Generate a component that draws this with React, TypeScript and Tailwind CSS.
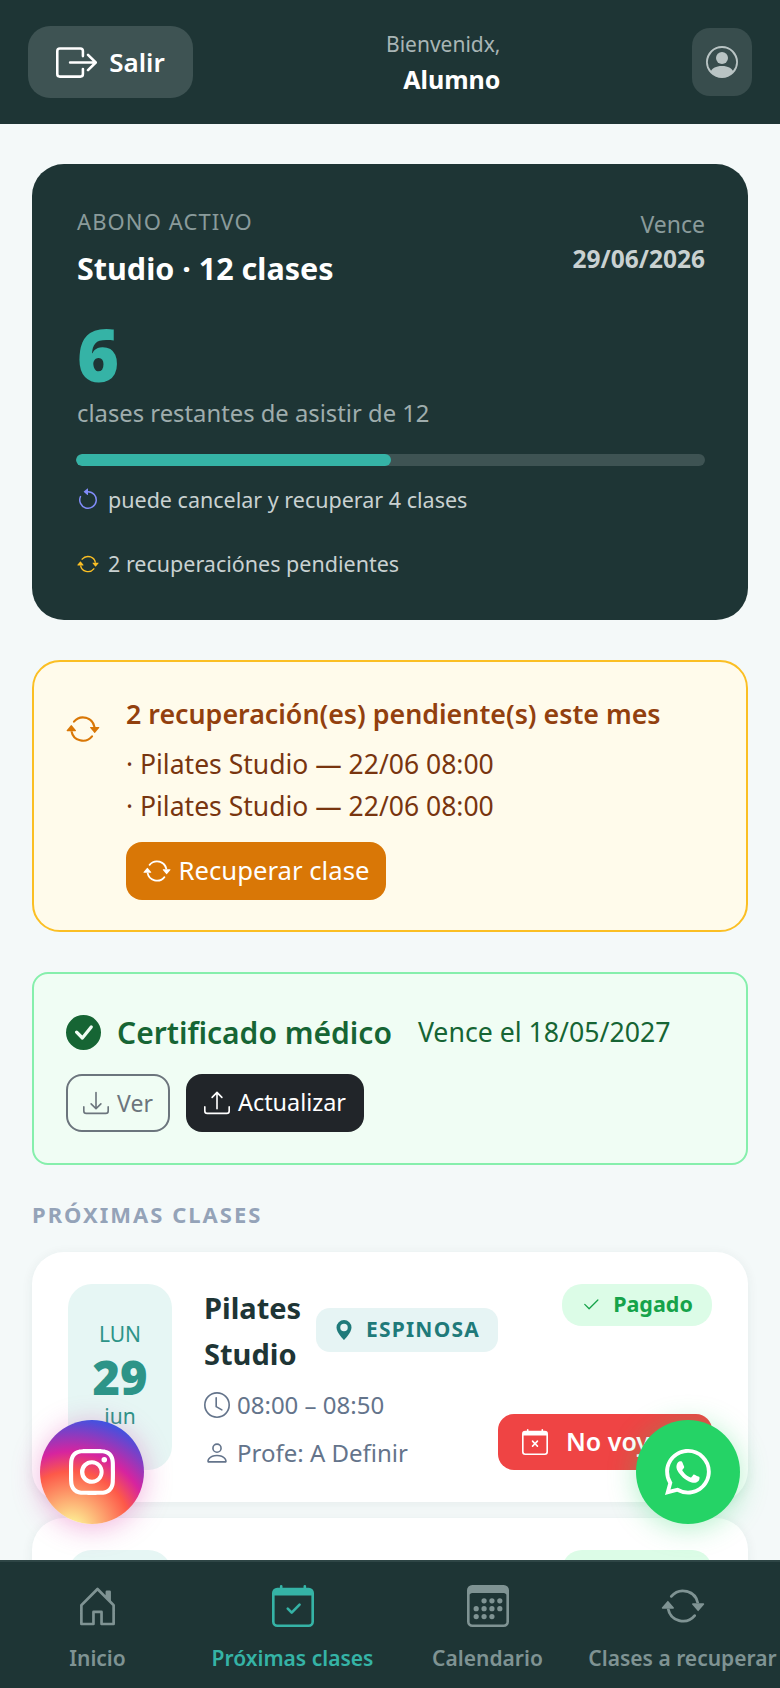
import React from "react";
import {
  BsBoxArrowRight, BsPersonCircle, BsArrowRepeat, BsArrowCounterclockwise, BsCheckCircleFill,
  BsDownload, BsUpload, BsGeoAltFill, BsClock, BsPerson, BsCalendarX, BsCalendarCheck, BsCalendar3,
  BsHouseDoor, BsInstagram, BsWhatsapp, BsCheck2,
} from "react-icons/bs";

function ClassCard() {
  return (
    <div className="flex rounded-[32px] bg-white px-9 py-8 h-[250px] shrink-0 shadow-[0_2px_12px_rgba(30,53,53,0.07)]">
      <div className="w-[104px] h-[186px] shrink-0 rounded-3xl bg-[#e6f6f4] flex flex-col items-center pt-[35px] text-[#2d9488]">
        <span className="text-[21px] leading-[30px]">LUN</span>
        <span className="mt-[3px] text-[47px] leading-[50px] font-black">29</span>
        <span className="text-[21px] leading-[28px]">jun</span>
      </div>
      <div className="ml-8 flex-1 flex flex-col">
        <div className="flex items-start justify-between">
          <div className="flex items-center mt-[1px]">
            <div className="w-[96px] text-[29px] leading-[46px] font-bold text-[#1e3535]">Pilates Studio</div>
            <div className="ml-4 -mt-[2px] h-[44px] w-[182px] justify-center rounded-[14px] bg-[#e6f4f4] flex items-center gap-[12px] text-[#1f7a7a]">
              <BsGeoAltFill size={20} />
              <span className="text-[21px] font-bold tracking-[1.2px]">ESPINOSA</span>
            </div>
          </div>
          <div className="h-[42px] w-[150px] rounded-[20px] bg-[#dcfce7] flex items-center justify-center gap-3 text-[#16a34a]">
            <BsCheck2 size={20} />
            <span className="-mt-[2px] text-[21.5px] font-bold">Pagado</span>
          </div>
        </div>
        <div className="flex justify-between">
          <div>
            <div className="mt-[4px] flex items-center gap-[7px] text-[24px] leading-[48px] text-[#64748b]"><BsClock size={26} />08:00 – 08:50</div>
            <div className="flex items-center gap-[7px] text-[24px] leading-[48px] text-[#64748b]"><BsPerson size={26} />Profe: A Definir</div>
          </div>
          <div className="mt-[37px] h-[56px] w-[214px] rounded-2xl bg-[#ef4444] flex items-center pl-6 gap-[18px] text-white">
            <BsCalendarX size={26} />
            <span className="text-[25px] font-semibold">No voy</span>
          </div>
        </div>
      </div>
    </div>
  );
}

function NavItem({ icon, label, active }: { icon: React.ReactNode; label: string; active?: boolean }) {
  return (
    <div className={active ? "flex flex-col items-center text-[#35b3a6]" : "flex flex-col items-center text-[#7f9393]"}>
      <div className="h-[48px] flex items-center">{icon}</div>
      <span className="mt-[13px] text-[21px] leading-[30px] font-semibold whitespace-nowrap">{label}</span>
    </div>
  );
}

export default function App() {
  return (
    <div className="relative w-[780px] h-[1688px] overflow-hidden flex flex-col bg-[#f4f9f9] font-['Noto_Sans','Open_Sans',sans-serif]">
      <header className="h-[124px] shrink-0 bg-[#1e3535] px-7 flex items-center justify-between">
        <div className="w-[165px] h-[72px] rounded-[22px] bg-[#3e5353] flex items-center justify-center gap-[12px] text-white">
          <BsBoxArrowRight size={41} />
          <span className="text-[26px] font-semibold">Salir</span>
        </div>
        <div className="w-[116px] text-right">
          <div className="text-[21px] leading-[34px] text-[#a9b5b5] whitespace-nowrap">Bienvenidx,</div>
          <div className="text-[25px] leading-[36px] font-bold text-white">Alumno</div>
        </div>
        <div className="w-[60px] h-[68px] rounded-[18px] bg-[#384d4d] flex items-center justify-center text-[#b9c4c4]">
          <BsPersonCircle size={32} />
        </div>
      </header>

      <main className="flex-1 min-h-0 overflow-hidden px-8 pt-10 flex flex-col">
        <section className="h-[456px] shrink-0 rounded-[32px] bg-[#1e3535] pl-[45px] pr-[43px] pt-[40px]">
          <div className="flex justify-between">
            <div>
              <div className="-mt-[1px] text-[22px] leading-[36px] tracking-[1.1px] text-[#8a9b9b]">ABONO ACTIVO</div>
              <div className="mt-[3px] text-[30.5px] leading-[52px] font-bold text-white">Studio · 12 clases</div>
            </div>
            <div className="text-right pt-[2px]">
              <div className="text-[23px] leading-[36px] text-[#8a9b9b]">Vence</div>
              <div className="text-[24.5px] leading-[34px] font-bold text-[#c9d1d1]">29/06/2026</div>
            </div>
          </div>
          <div className="mt-[22px] text-[72px] leading-[76px] font-black text-[#35b3a6]">6</div>
          <div className="mt-[3px] text-[23.8px] leading-[36px] text-[#9fadad]">clases restantes de asistir de 12</div>
          <div className="mt-[23px] -ml-[1px] h-3 w-[629px] rounded-full bg-[#3e5353] overflow-hidden">
            <div className="h-full w-1/2 rounded-full bg-[#35b3a6]" />
          </div>
          <div className="mt-[19px] -ml-[1px] flex items-center gap-[8px] h-[30px] text-[21.5px] text-[#c9d1d1]">
            <BsArrowCounterclockwise size={24} className="text-[#818cf8]" />
            <span>puede cancelar y recuperar 4 clases</span>
          </div>
          <div className="mt-[34px] flex items-center gap-[9px] h-[30px] text-[21.5px] text-[#c9d1d1]">
            <BsArrowRepeat size={22} className="text-[#fbbf24]" />
            <span>2 recuperaciónes pendientes</span>
          </div>
        </section>

        <section className="mt-10 h-[272px] shrink-0 rounded-[28px] border-2 border-[#fbbf24] bg-[#fffbeb] pl-[32px] pt-[30px] flex">
          <BsArrowRepeat size={34} className="mt-[20px] text-[#d97706] shrink-0" />
          <div className="ml-[26px]">
            <div className="text-[26.8px] leading-[44px] font-semibold text-[#92400e] whitespace-nowrap">2 recuperación(es) pendiente(s) este mes</div>
            <div className="mt-[7px] text-[26.5px] leading-[42px] text-[#78350f]">· Pilates Studio — 22/06 08:00</div>
            <div className="text-[26.5px] leading-[42px] text-[#78350f]">· Pilates Studio — 22/06 08:00</div>
            <div className="mt-[15px] w-[260px] h-[58px] rounded-2xl bg-[#d97706] flex items-center justify-center gap-[8px] text-white text-[25.7px]">
              <BsArrowRepeat size={28} />
              <span>Recuperar clase</span>
            </div>
          </div>
        </section>

        <section className="mt-10 h-[193px] shrink-0 rounded-2xl border-2 border-[#86efac] bg-[#f0fdf4] pl-[32px] pt-[38px]">
          <div className="flex items-center h-[40px]">
            <BsCheckCircleFill size={35} className="text-[#166534]" />
            <span className="ml-[16px] text-[30px] font-semibold text-[#166534]">Certificado médico</span>
            <span className="ml-[26px] text-[26.7px] text-[#166534]">Vence el 18/05/2027</span>
          </div>
          <div className="mt-[22px] flex gap-4">
            <div className="w-[104px] h-[58px] rounded-2xl border-2 border-[#6c757d] flex items-center justify-center gap-2 text-[#6c757d] text-[23px]">
              <BsDownload size={26} />
              <span>Ver</span>
            </div>
            <div className="w-[178px] h-[58px] rounded-2xl bg-[#212529] flex items-center justify-center gap-2 text-white text-[23.4px]">
              <BsUpload size={26} />
              <span>Actualizar</span>
            </div>
          </div>
        </section>

        <div className="mt-[34px] h-[30px] leading-[30px] text-[22px] font-bold tracking-[2px] text-[#94a3b8]">PRÓXIMAS CLASES</div>

        <div className="mt-[23px] flex flex-col gap-4">
          <ClassCard />
          <ClassCard />
        </div>
      </main>

      <nav className="h-[128px] shrink-0 bg-[#1e3535] border-t-2 border-[#2e4545] grid grid-cols-4 pt-[20px]">
        <NavItem icon={<BsHouseDoor size={43} />} label="Inicio" />
        <NavItem icon={<BsCalendarCheck size={42} />} label="Próximas clases" active />
        <NavItem icon={<BsCalendar3 size={42} />} label="Calendario" />
        <NavItem icon={<BsArrowRepeat size={44} />} label="Clases a recuperar" />
      </nav>

      <div className="absolute left-[40px] top-[1420px] w-[104px] h-[104px] rounded-full flex items-center justify-center text-white bg-[radial-gradient(circle_at_30%_107%,#fdf497_0%,#fdf497_5%,#fd5949_45%,#d6249f_60%,#285aeb_90%)] shadow-[0_4px_28px_rgba(214,36,159,0.35)]">
        <BsInstagram size={46} />
      </div>
      <div className="absolute left-[636px] top-[1420px] w-[104px] h-[104px] rounded-full flex items-center justify-center text-white bg-[#25d366] shadow-[0_4px_28px_rgba(37,211,102,0.35)]">
        <BsWhatsapp size={46} />
      </div>
    </div>
  );
}
